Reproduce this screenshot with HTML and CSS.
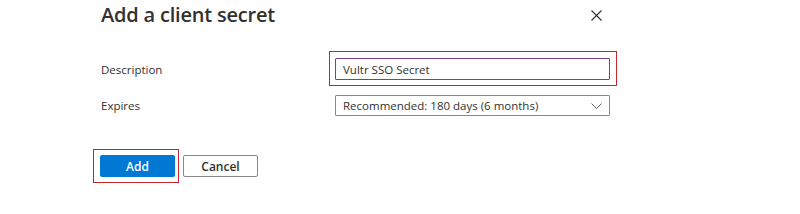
FILE: index.html
```html
<!DOCTYPE html>
<html>
<head>
    <title>Add a client secret</title>
    <link rel="stylesheet" href="styles.css">
</head>
<body>
<div class="panel">
    <div class="header">
        <h1 class="title">Add a client secret</h1>
        <button class="close" aria-label="Close">
            <svg width="11" height="11" viewBox="0 0 11 11">
                <path d="M0.5 0.5 L10.5 10.5 M10.5 0.5 L0.5 10.5" stroke="#323130" stroke-width="1.1" fill="none"/>
            </svg>
        </button>
    </div>
    <div class="form">
        <label class="label" for="desc">Description</label>
        <div class="mark field-mark">
            <input type="text" id="desc" class="text-input" value="Vultr SSO Secret" />
        </div>
        <label class="label" for="expires">Expires</label>
        <div class="dropdown" id="expires">
            <span class="dropdown-text">Recommended: 180 days (6 months)</span>
            <svg class="chevron" width="11" height="6" viewBox="0 0 11 6">
                <path d="M0.5 0.5 L5.5 5.5 L10.5 0.5" stroke="#605e5c" stroke-width="1" fill="none"/>
            </svg>
        </div>
    </div>
    <div class="actions">
        <div class="mark btn-mark">
            <button class="btn primary">Add</button>
        </div>
        <button class="btn">Cancel</button>
    </div>
</div>
</body>
</html>
```

FILE: styles.css
```css
body{
    margin:0;
    background:#fff;
    font-family:"Open Sans","Noto Sans",sans-serif;
    color:#323130;
}
.panel{
    margin-left:101px;
    width:509px;
    padding-bottom:20px;
}
.header{
    display:flex;
    align-items:center;
    justify-content:space-between;
    height:30px;
}
.title{
    margin:0;
    font-size:20px;
    font-weight:600;
    line-height:28px;
    letter-spacing:-0.2px;
}
.close{
    border:0;
    background:none;
    padding:0;
    margin-right:8px;
    margin-top:1px;
    width:11px;
    height:11px;
    display:flex;
}
.form{
    display:grid;
    grid-template-columns:234px 275px;
    row-gap:15px;
    align-items:center;
    margin-top:28px;
}
.label{
    font-size:11.5px;
}
.mark{
    border:1px solid #c4262e;
}
.field-mark{
    margin:-7px -7px -6px -6px;
    padding:6px 6px 5px 5px;
}
.text-input{
    display:block;
    box-sizing:border-box;
    width:275px;
    height:22px;
    margin:0;
    padding:0 7px;
    border:1px solid #7a3f9e;
    border-radius:1px;
    font:11.5px "Open Sans","Noto Sans",sans-serif;
    color:#323130;
    outline:none;
}
.dropdown{
    box-sizing:border-box;
    height:21px;
    border:1px solid #8a8886;
    border-radius:1px;
    display:flex;
    align-items:center;
    justify-content:space-between;
    padding:0 7px;
    font-size:11.5px;
}
.actions{
    display:flex;
    align-items:center;
    gap:8px;
    margin-top:33px;
    margin-left:-1px;
}
.btn-mark{
    margin:0 -4px 0 -7px;
    padding:5px 3px 5px 6px;
}
.btn{
    box-sizing:border-box;
    width:75px;
    height:22px;
    border:1px solid #8a8886;
    border-radius:2px;
    background:#fff;
    color:#323130;
    font:600 12px "Open Sans","Noto Sans",sans-serif;
    padding:0;
    display:block;
}
.btn.primary{
    background:#0078d4;
    border-color:#0078d4;
    color:#fff;
}
```
